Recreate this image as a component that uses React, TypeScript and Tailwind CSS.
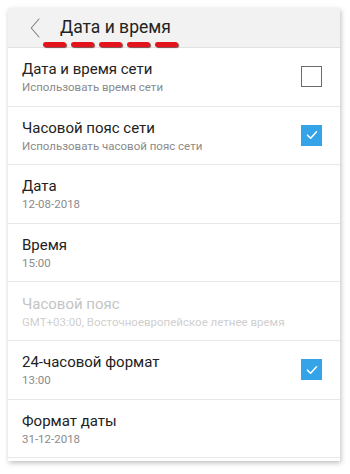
import React from "react";

type Row = {
  title: string;
  sub: string;
  check?: "on" | "off";
  disabled?: boolean;
};

const rows: Row[] = [
  { title: "Дата и время сети", sub: "Использовать время сети", check: "off" },
  { title: "Часовой пояс сети", sub: "Использовать часовой пояс сети", check: "on" },
  { title: "Дата", sub: "12-08-2018" },
  { title: "Время", sub: "15:00" },
  { title: "Часовой пояс", sub: "GMT+03:00, Восточноевропейское летнее время", disabled: true },
  { title: "24-часовой формат", sub: "13:00", check: "on" },
  { title: "Формат даты", sub: "31-12-2018" },
];

function Checkbox({ on }: { on: boolean }) {
  if (on) {
    return (
      <div className="w-[21px] h-[21px] bg-[#35a3e8] flex items-center justify-center">
        <svg width="14" height="14" viewBox="0 0 14 14" fill="none">
          <path d="M2.5 7.2 L5.6 10.2 L11.5 3.8" stroke="white" strokeWidth="1.6" strokeLinecap="round" strokeLinejoin="round" />
        </svg>
      </div>
    );
  }
  return <div className="w-[21px] h-[21px] border-[1.5px] border-[#6b6b6b] bg-white" />;
}

export default function App() {
  return (
    <div className="w-[350px] h-[474px] bg-white pt-2 pl-2 overflow-hidden" style={{ fontFamily: "Roboto, 'Noto Sans', sans-serif" }}>
      <div className="w-[332px] bg-white shadow-[1px_2px_5px_rgba(0,0,0,0.25)]">
        {/* Header */}
        <div className="relative h-10 bg-[#f2f2f2] border-b border-[#e2e2e2] flex items-center">
          <svg className="ml-[22px]" width="10" height="20" viewBox="0 0 10 20" fill="none">
            <path d="M9 1 L1.2 10 L9 19" stroke="#808080" strokeWidth="1.1" strokeLinecap="round" strokeLinejoin="round" />
          </svg>
          <span className="ml-[20px] text-[17.5px] text-[#222] leading-none">Дата и время</span>
          {/* red annotation dashes */}
          <div className="absolute left-[35px] top-[34px] flex gap-[5px]">
            {[0, 1, 2, 3, 4].map((i) => (
              <div key={i} className="w-[23px] h-[5px] rounded-full bg-[#e3141c] shadow-[1px_1px_1px_rgba(90,0,0,0.7)]" />
            ))}
          </div>
        </div>

        {rows.map((r) => (
          <div key={r.title} className="h-[58.6px] border-b border-[#e8e8e8] flex items-center pl-[14px] pr-[18px]">
            <div className="flex-1 flex flex-col pt-[2px]">
              <span className={`text-[15px] leading-[19px] ${r.disabled ? "text-[#c4c4c4]" : "text-[#222]"}`}>{r.title}</span>
              <span className={`text-[11.5px] leading-[15px] mt-[1px] ${r.disabled ? "text-[#cfcfcf]" : "text-[#8a8a8a]"}`}>{r.sub}</span>
            </div>
            {r.check && <Checkbox on={r.check === "on"} />}
          </div>
        ))}
        <div className="h-[3px]" />
      </div>
    </div>
  );
}
